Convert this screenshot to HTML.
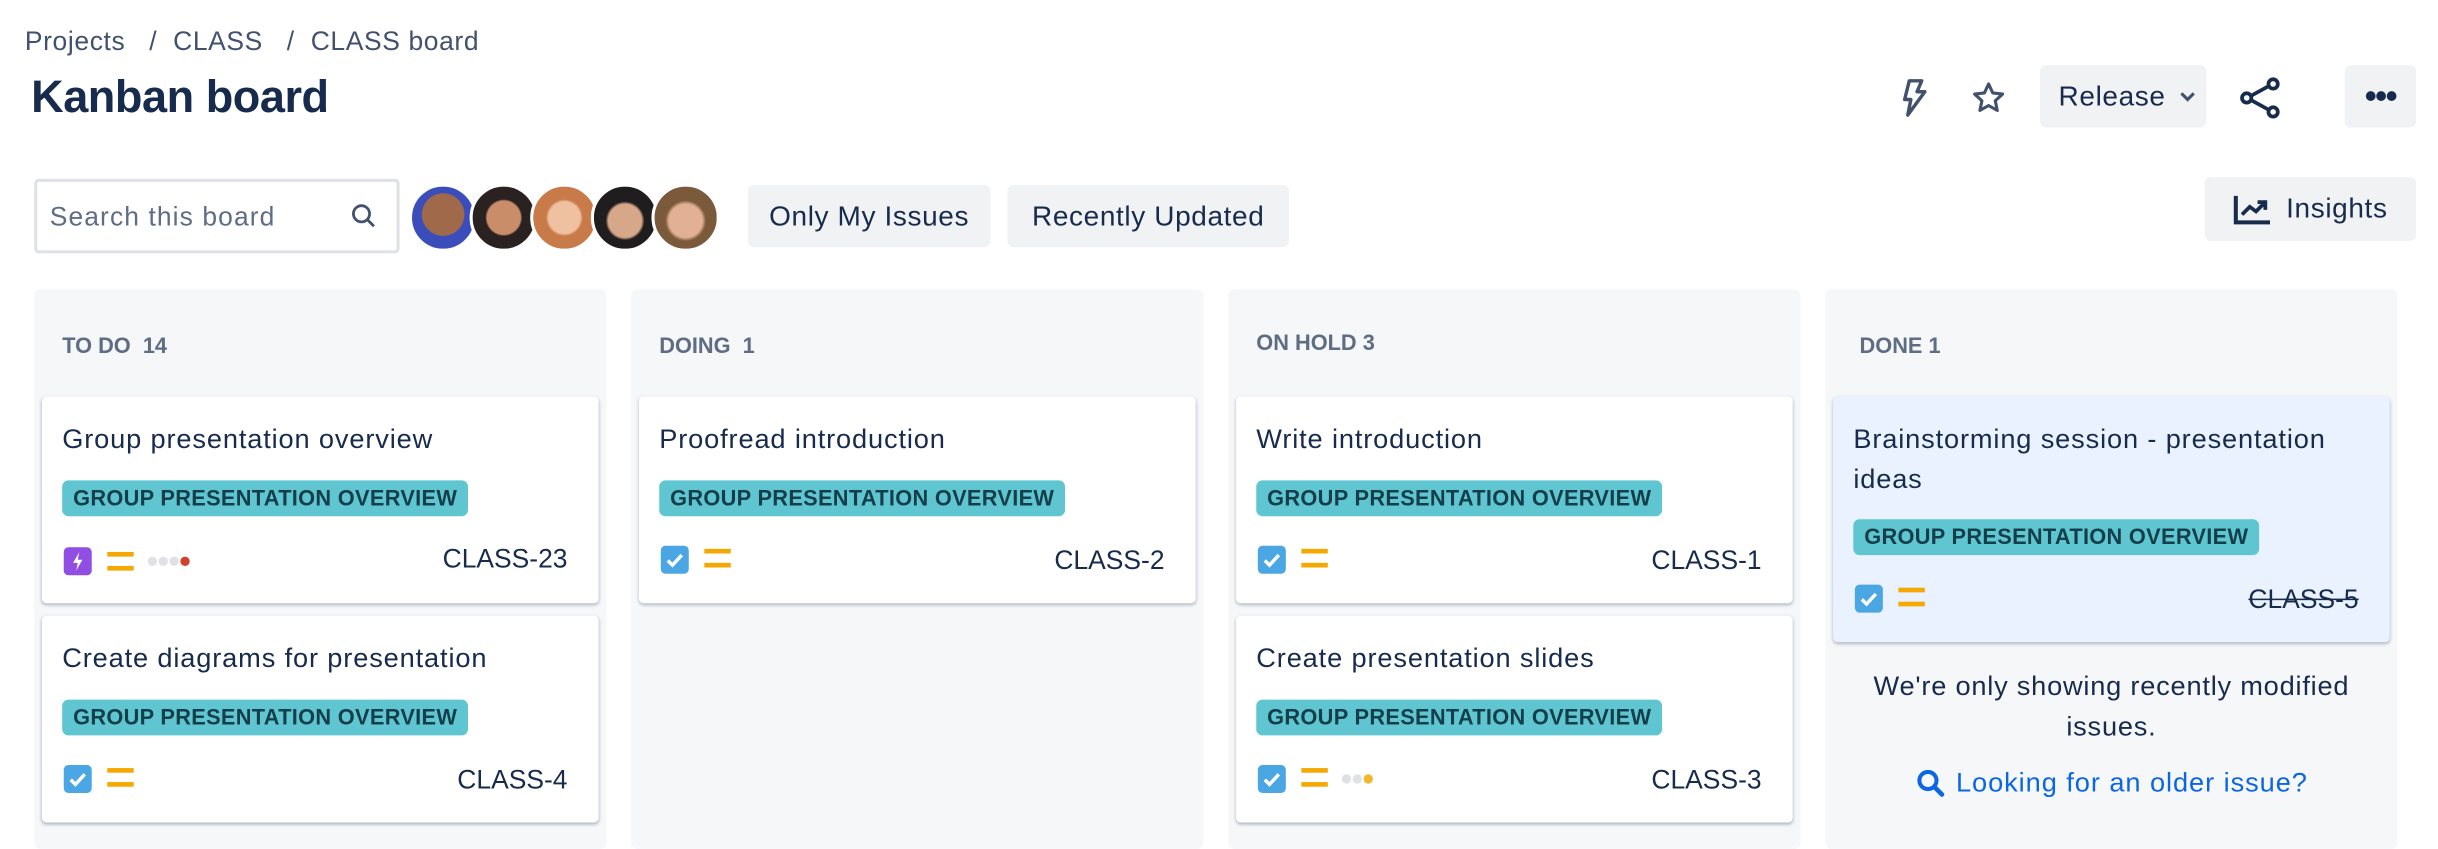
<!DOCTYPE html>
<html><head><meta charset="utf-8"><style>
html,body{margin:0;padding:0;background:#fff;width:2438px;height:830px;overflow:hidden}
#w{position:absolute;left:0;top:0;width:1568px;height:534px;transform:scale(1.5548);transform-origin:0 0;font-family:"Liberation Sans",sans-serif;color:#172b4d}
.a{position:absolute}
.btn{position:absolute;background:#f1f2f4;border-radius:4px;font-size:18px;color:#172b4d;display:flex;align-items:center;justify-content:center;letter-spacing:.4px}
.col{position:absolute;top:186px;width:368px;height:360px;background:#f6f7f9;border-radius:4px}
.ch{position:absolute;left:18px;top:28px;font-size:14px;font-weight:bold;color:#5e6c84}
.card{position:absolute;left:5px;width:358px;background:#fff;border-radius:3px;box-shadow:0 1px 2px rgba(9,30,66,.3)}
.t{position:absolute;left:13px;top:14px;font-size:17.5px;line-height:26px;color:#172b4d;width:330px;letter-spacing:.55px}
.loz{position:absolute;left:13px;height:23px;background:#5fc6d1;border-radius:4px;font-size:14px;font-weight:bold;color:#133e4a;line-height:23px;padding:0 7px;letter-spacing:.2px}
.chk{position:absolute;left:14px;width:18px;height:18px;background:#4ba6e4;border-radius:3px}
.pr{position:absolute;left:42px;width:17px;height:12px;border-top:3px solid #f5a800;border-bottom:3px solid #f5a800;box-sizing:border-box}
.key{position:absolute;right:20px;font-size:17px;color:#172b4d}
.dot{position:absolute;width:6px;height:6px;border-radius:50%;background:#dfe1e6}
.av{position:absolute;top:118px;width:44px;height:44px;border-radius:50%;border:2px solid #fff;box-sizing:border-box}
</style></head><body><div id="w">
<div class="a" style="left:16px;top:17px;font-size:17px;color:#42526e;letter-spacing:.4px">Projects &nbsp;&nbsp;/&nbsp; CLASS &nbsp;&nbsp;/&nbsp; CLASS board</div>
<div class="a" style="left:20px;top:47px;font-size:29px;font-weight:bold;color:#172b4d;letter-spacing:-.3px">Kanban board</div>

<svg class="a" style="left:1219px;top:50px" width="24" height="26" viewBox="0 0 24 26"><path d="M9 2h8l-3 7h5L8 24l2-10H6z" fill="none" stroke="#42526e" stroke-width="2.2" stroke-linejoin="round"/></svg>
<svg class="a" style="left:1267px;top:51px" width="24" height="24" viewBox="0 0 24 24"><path d="M12 3l2.7 5.8 6.3.7-4.7 4.3 1.3 6.2L12 16.9 6.4 20l1.3-6.2L3 9.5l6.3-.7z" fill="none" stroke="#42526e" stroke-width="2" stroke-linejoin="round"/></svg>
<div class="btn" style="left:1312px;top:42px;width:107px;height:40px;justify-content:flex-start;padding-left:12px;box-sizing:border-box">Release<svg style="margin-left:8px" width="12" height="10" viewBox="0 0 12 10"><path d="M2 3l4 4 4-4" fill="none" stroke="#42526e" stroke-width="2"/></svg></div>
<svg class="a" style="left:1440px;top:49px" width="28" height="28" viewBox="0 0 28 28"><circle cx="22" cy="5" r="3" fill="none" stroke="#172b4d" stroke-width="2.4"/><circle cx="5" cy="14" r="3" fill="none" stroke="#172b4d" stroke-width="2.4"/><circle cx="22" cy="23" r="3" fill="none" stroke="#172b4d" stroke-width="2.4"/><path d="M8 12.5l11-6M8 15.5l11 6" stroke="#172b4d" stroke-width="2.4"/></svg>
<div class="btn" style="left:1508px;top:42px;width:46px;height:40px;font-size:22px;font-weight:bold;letter-spacing:-1px">•••</div>

<div class="a" style="left:22px;top:115px;width:235px;height:48px;border:2px solid #dfe1e6;box-sizing:border-box;border-radius:3px"></div>
<div class="a" style="left:32px;top:130px;font-size:17px;color:#5e6c84;letter-spacing:.7px">Search this board</div>
<svg class="a" style="left:225px;top:130px" width="18" height="18" viewBox="0 0 18 18"><circle cx="7.5" cy="7.5" r="5.2" fill="none" stroke="#42526e" stroke-width="1.8"/><path d="M11.5 11.5l4 4" stroke="#42526e" stroke-width="1.8"/></svg>
<div class="av" style="left:263px;background:radial-gradient(circle at 50% 45%,#a06a4a 0 45%,#3b4dbb 47%)"></div>
<div class="av" style="left:302px;background:radial-gradient(circle at 50% 50%,#c98d6a 0 38%,#2a2220 42%)"></div>
<div class="av" style="left:341px;background:radial-gradient(circle at 50% 50%,#efc1a0 0 36%,#c87a48 42%)"></div>
<div class="av" style="left:380px;background:radial-gradient(circle at 50% 55%,#d7a78a 0 36%,#1f1d1d 42%)"></div>
<div class="av" style="left:419px;background:radial-gradient(circle at 50% 55%,#e2b195 0 36%,#7a5a3a 44%)"></div>
<div class="btn" style="left:481px;top:119px;width:156px;height:40px">Only My Issues</div>
<div class="btn" style="left:648px;top:119px;width:181px;height:40px">Recently Updated</div>
<div class="btn" style="left:1418px;top:114px;width:136px;height:41px"><svg style="margin-right:8px" width="26" height="22" viewBox="0 0 26 22"><path d="M2 2v17h22" fill="none" stroke="#172b4d" stroke-width="2.6"/><path d="M6 14l5-5 4 3 6-6M16 6h5v5" fill="none" stroke="#172b4d" stroke-width="2.4"/></svg>Insights</div>

<!-- col1 -->
<div class="col" style="left:22px"><div class="ch">TO DO&nbsp; 14</div>
<div class="card" style="top:69px;height:133px"><div class="t">Group presentation overview</div><div class="loz" style="top:54px">GROUP PRESENTATION OVERVIEW</div>
<div class="a" style="left:14px;top:97px;width:18px;height:18px;background:#904ee2;border-radius:3px"><svg width="18" height="18" viewBox="0 0 18 18"><path d="M10 3L6 10h3l-1 5 4-7H9z" fill="#fff"/></svg></div>
<div class="pr" style="top:100px"></div>
<div class="dot" style="left:68px;top:103px"></div><div class="dot" style="left:75px;top:103px"></div><div class="dot" style="left:82px;top:103px"></div><div class="dot" style="left:89px;top:103px;background:#d0402b"></div>
<div class="key" style="top:95px">CLASS-23</div></div>
<div class="card" style="top:210px;height:133px"><div class="t">Create diagrams for presentation</div><div class="loz" style="top:54px">GROUP PRESENTATION OVERVIEW</div>
<div class="chk" style="top:96px"><svg width="18" height="18" viewBox="0 0 18 18"><path d="M4.5 9.5l3 3 6-6.5" fill="none" stroke="#fff" stroke-width="2.2"/></svg></div><div class="pr" style="top:98px"></div><div class="key" style="top:96px">CLASS-4</div></div>
</div>
<!-- col2 -->
<div class="col" style="left:406px"><div class="ch">DOING&nbsp; 1</div>
<div class="card" style="top:69px;height:133px"><div class="t">Proofread introduction</div><div class="loz" style="top:54px">GROUP PRESENTATION OVERVIEW</div>
<div class="chk" style="top:96px"><svg width="18" height="18" viewBox="0 0 18 18"><path d="M4.5 9.5l3 3 6-6.5" fill="none" stroke="#fff" stroke-width="2.2"/></svg></div><div class="pr" style="top:98px"></div><div class="key" style="top:96px">CLASS-2</div></div>
</div>
<!-- col3 -->
<div class="col" style="left:790px"><div class="ch" style="top:26px">ON HOLD 3</div>
<div class="card" style="top:69px;height:133px"><div class="t">Write introduction</div><div class="loz" style="top:54px">GROUP PRESENTATION OVERVIEW</div>
<div class="chk" style="top:96px"><svg width="18" height="18" viewBox="0 0 18 18"><path d="M4.5 9.5l3 3 6-6.5" fill="none" stroke="#fff" stroke-width="2.2"/></svg></div><div class="pr" style="top:98px"></div><div class="key" style="top:96px">CLASS-1</div></div>
<div class="card" style="top:210px;height:133px"><div class="t">Create presentation slides</div><div class="loz" style="top:54px">GROUP PRESENTATION OVERVIEW</div>
<div class="chk" style="top:96px"><svg width="18" height="18" viewBox="0 0 18 18"><path d="M4.5 9.5l3 3 6-6.5" fill="none" stroke="#fff" stroke-width="2.2"/></svg></div><div class="pr" style="top:98px"></div>
<div class="dot" style="left:68px;top:102px"></div><div class="dot" style="left:75px;top:102px"></div><div class="dot" style="left:82px;top:102px;background:#f3b72d"></div>
<div class="key" style="top:96px">CLASS-3</div></div>
</div>
<!-- col4 -->
<div class="col" style="left:1174px"><div class="ch" style="left:22px">DONE 1</div>
<div class="card" style="top:69px;height:158px;background:#e9f2fe"><div class="t" style="width:320px">Brainstorming session - presentation ideas</div><div class="loz" style="top:79px">GROUP PRESENTATION OVERVIEW</div>
<div class="chk" style="top:121px"><svg width="18" height="18" viewBox="0 0 18 18"><path d="M4.5 9.5l3 3 6-6.5" fill="none" stroke="#fff" stroke-width="2.2"/></svg></div><div class="pr" style="top:123px"></div><div class="key" style="top:121px;text-decoration:line-through">CLASS-5</div></div>
<div class="a" style="left:0;top:242px;width:368px;text-align:center;font-size:17.5px;line-height:26px;color:#172b4d;letter-spacing:.5px">We're only showing recently modified<br>issues.</div>
<div class="a" style="left:58px;top:307px;font-size:17.5px;color:#0c66e4;display:flex;align-items:center;letter-spacing:.6px"><svg style="margin-right:6px" width="20" height="20" viewBox="0 0 20 20"><circle cx="8" cy="8" r="5.5" fill="none" stroke="#0c66e4" stroke-width="2.6"/><path d="M12 12l5 5" stroke="#0c66e4" stroke-width="3" stroke-linecap="round"/></svg>Looking for an older issue?</div>
</div>
</div></body></html>
